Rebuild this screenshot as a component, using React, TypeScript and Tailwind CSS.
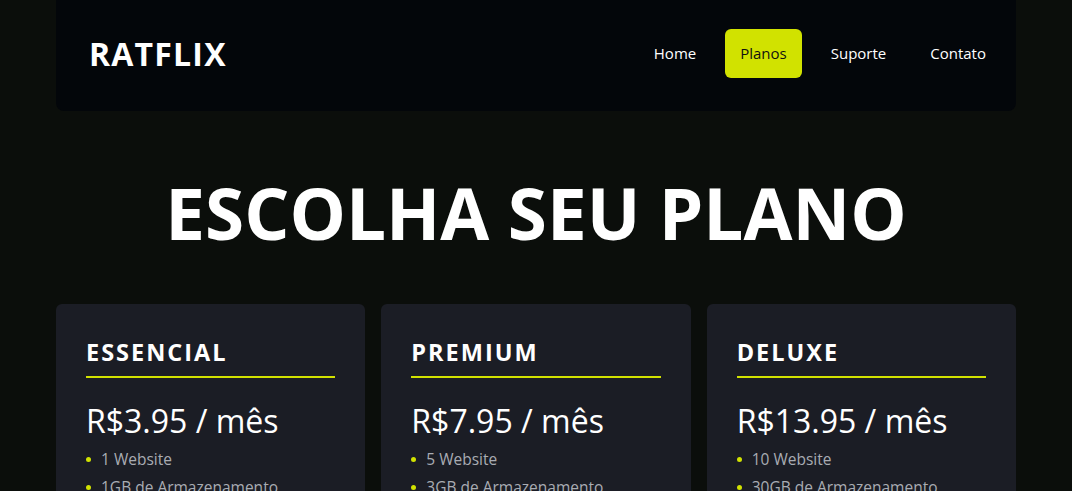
const plans = [
  { name: "ESSENCIAL", price: "R$3.95 / mês", items: ["1 Website", "1GB de Armazenamento"] },
  { name: "PREMIUM", price: "R$7.95 / mês", items: ["5 Website", "3GB de Armazenamento"] },
  { name: "DELUXE", price: "R$13.95 / mês", items: ["10 Website", "30GB de Armazenamento"] },
];

const links = ["Home", "Planos", "Suporte", "Contato"];

export default function App() {
  return (
    <div className="min-h-screen bg-[#0b0e0b] font-['Open_Sans',sans-serif] text-white">
      <div className="mx-auto max-w-[960px]">
        <header className="flex h-[111px] items-center justify-between rounded-b-lg bg-[#03060a] pl-[33px] pr-[15px]">
          <h1 className="mb-[3px] text-[32px] font-bold tracking-[1.2px]">RATFLIX</h1>
          <nav className="mb-[5px] flex items-center gap-[14px]">
            {links.map((l) => (
              <a
                key={l}
                className={
                  l === "Planos"
                    ? "rounded-md bg-[#d1e200] px-[15px] py-[12px] text-[15px] leading-[25px] text-[#111]"
                    : "px-[15px] py-[12px] text-[15px] leading-[25px] text-white"
                }
              >
                {l}
              </a>
            ))}
          </nav>
        </header>

        <h2 className="pt-[52px] pb-[41px] text-center text-[71px] font-bold leading-[100px]">
          ESCOLHA SEU PLANO
        </h2>

        <div className="grid grid-cols-3 gap-4">
          {plans.map((p) => (
            <div key={p.name} className="rounded-md bg-[#1b1d25] px-[30px] pt-[30px] pb-8">
              <h3 className="border-b-2 border-[#d1e200] pb-[6px] text-[23.5px] font-bold leading-[36px] tracking-[2px]">
                {p.name}
              </h3>
              <p className="mt-[19px] text-[32px] leading-[48px]">{p.price}</p>
              <ul className="mt-[1px] flex flex-col gap-[2px]">
                {p.items.map((it) => (
                  <li key={it} className="flex items-center gap-[10px] text-[15.5px] leading-[26px] text-[#a9acb3]">
                    <span className="h-[5px] w-[5px] rounded-full bg-[#d1e200]" />
                    {it}
                  </li>
                ))}
              </ul>
            </div>
          ))}
        </div>
      </div>
    </div>
  );
}
